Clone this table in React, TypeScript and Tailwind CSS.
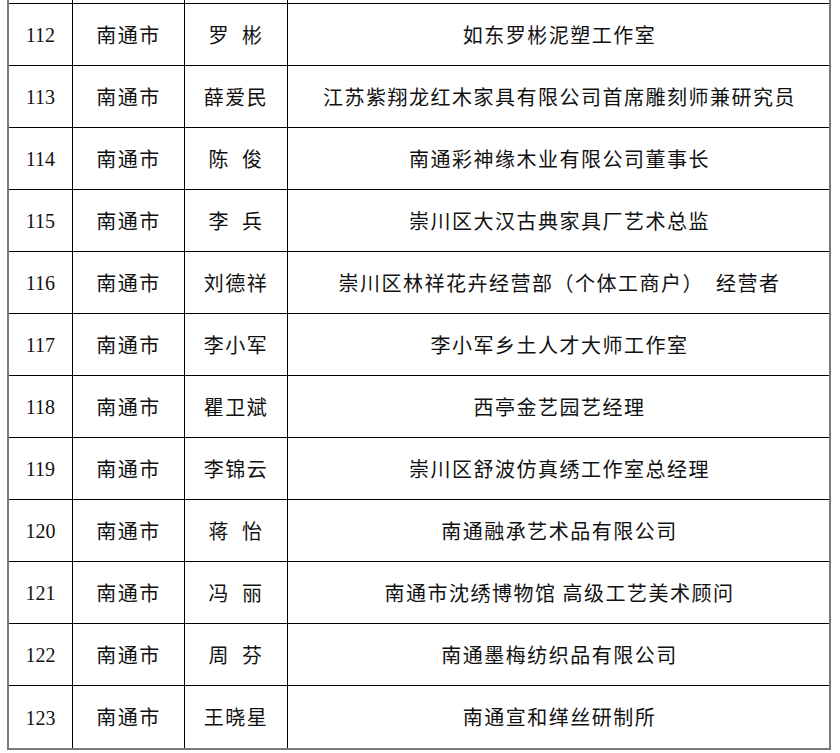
import React from 'react';

const rows = [
  { no: '112', city: '南通市', name: '罗  彬', unit: '如东罗彬泥塑工作室' },
  { no: '113', city: '南通市', name: '薛爱民', unit: '江苏紫翔龙红木家具有限公司首席雕刻师兼研究员' },
  { no: '114', city: '南通市', name: '陈  俊', unit: '南通彩神缘木业有限公司董事长' },
  { no: '115', city: '南通市', name: '李  兵', unit: '崇川区大汉古典家具厂艺术总监' },
  { no: '116', city: '南通市', name: '刘德祥', unit: '崇川区林祥花卉经营部（个体工商户）  经营者' },
  { no: '117', city: '南通市', name: '李小军', unit: '李小军乡土人才大师工作室' },
  { no: '118', city: '南通市', name: '瞿卫斌', unit: '西亭金艺园艺经理' },
  { no: '119', city: '南通市', name: '李锦云', unit: '崇川区舒波仿真绣工作室总经理' },
  { no: '120', city: '南通市', name: '蒋  怡', unit: '南通融承艺术品有限公司' },
  { no: '121', city: '南通市', name: '冯  丽', unit: '南通市沈绣博物馆 高级工艺美术顾问' },
  { no: '122', city: '南通市', name: '周  芬', unit: '南通墨梅纺织品有限公司' },
  { no: '123', city: '南通市', name: '王晓星', unit: '南通宣和缂丝研制所' },
];

const cjk = "font-['Noto_Sans_CJK_SC',sans-serif] tracking-[1.5px]";

export default function App() {
  return (
    <div className="w-[840px] h-[753px] bg-white overflow-hidden">
      <div className="ml-[7px] w-[824px] border-l-2 border-r-2 border-b-2 border-[#7a7a7a] text-[20px] text-[#111]">
        <div className="grid grid-cols-[64px_112px_103px_1fr] h-[4px] border-b border-black">
          <div className="border-r border-black" />
          <div className="border-r border-black" />
          <div className="border-r border-black" />
          <div />
        </div>
        {rows.map((r, i) => (
          <div
            key={r.no}
            className={`grid grid-cols-[64px_112px_103px_1fr] h-[62px] ${i < rows.length - 1 ? 'border-b border-black' : ''}`}
          >
            <div className="border-r border-black flex items-center justify-center pt-px font-['Liberation_Serif',serif]">{r.no}</div>
            <div className={`border-r border-black flex items-center justify-center ${cjk}`}>{r.city}</div>
            <div className={`border-r border-black flex items-center justify-center whitespace-pre ${cjk}`}>{r.name}</div>
            <div className={`flex items-center justify-center pl-[2px] whitespace-pre ${cjk}`}>{r.unit}</div>
          </div>
        ))}
      </div>
    </div>
  );
}
